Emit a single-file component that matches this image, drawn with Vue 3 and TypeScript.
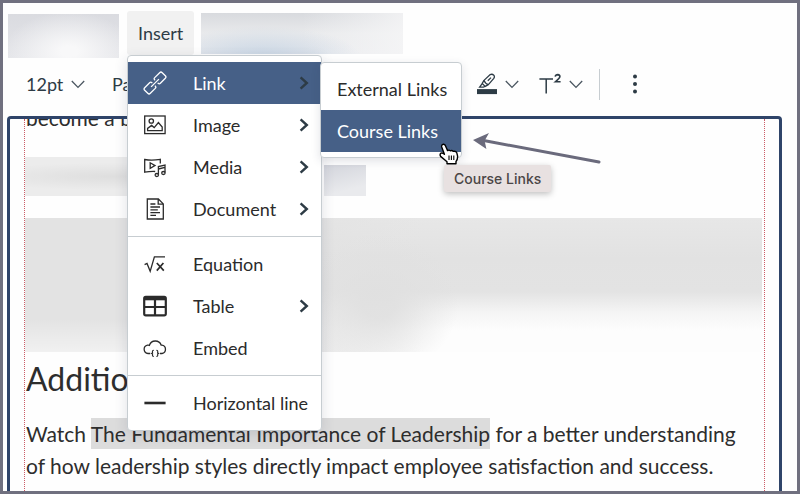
<script setup lang="ts">
import { ref } from 'vue'

interface MenuItem {
  id: string
  label: string
  submenu: boolean
}

const groups: MenuItem[][] = [
  [
    { id: 'link', label: 'Link', submenu: true },
    { id: 'image', label: 'Image', submenu: true },
    { id: 'media', label: 'Media', submenu: true },
    { id: 'document', label: 'Document', submenu: true },
  ],
  [
    { id: 'equation', label: 'Equation', submenu: false },
    { id: 'table', label: 'Table', submenu: true },
    { id: 'embed', label: 'Embed', submenu: false },
  ],
  [{ id: 'line', label: 'Horizontal line', submenu: false }],
]

const linkItems: string[] = ['External Links', 'Course Links']
const activeItem = ref('link')
const activeLink = ref('Course Links')
</script>

<template>
  <div class="frame">
    <nav class="menubar">
      <div class="redacted menus-left"></div>
      <div class="menu-anchor">
        <button class="insert" type="button">Insert</button>
        <div class="menu">
          <ul v-for="(group, index) in groups" :key="index" class="group">
            <li v-for="item in group" :key="item.id" class="row">
              <button
                type="button"
                class="item"
                :class="{ active: item.id === activeItem }"
                @mouseenter="activeItem = item.submenu ? item.id : activeItem"
              >
                <svg class="icon" viewBox="0 0 24 24" fill="none" stroke="currentColor" stroke-width="1.3">
                  <g v-if="item.id === 'link'" transform="rotate(-45 12 12)">
                    <path d="M10 10.2V9.6Q10 8 8.4 8H1.4Q-.4 8-.4 9.8V14.2Q-.4 16 1.4 16H8.4Q10 16 10 14.4V13.8" />
                    <path d="M14 10.2V9.6Q14 8 15.6 8H22.6Q24.4 8 24.4 9.8V14.2Q24.4 16 22.6 16H15.6Q14 16 14 14.4V13.8" />
                    <path d="M6.5 12H17.5" />
                  </g>
                  <g v-else-if="item.id === 'image'">
                    <rect x="1.7" y="3" width="20.4" height="17.6" />
                    <circle cx="8.3" cy="8" r="2.2" />
                    <path d="M4.6 17.6V15.4L8.6 12.4 11.2 14.6 15.4 9.6 19.2 14V17.6Z" />
                  </g>
                  <g v-else-if="item.id === 'media'">
                    <path d="M12.2 16.5Q7 16.3 1.7 17.2V4.5Q9 5.7 17.3 4.3V8.4" />
                    <path d="M7.2 7.8V13.4L12 10.6Z" />
                    <path d="M15.4 19.6V11.6L22 10V17.6M15.4 14L22 12.4" />
                    <ellipse cx="13.8" cy="20" rx="1.7" ry="1.5" />
                    <ellipse cx="20.4" cy="18" rx="1.7" ry="1.5" />
                  </g>
                  <g v-else-if="item.id === 'document'">
                    <path d="M4.3 2H15.4L20.3 6.9V22H4.3ZM15.2 2V7.1H20.3" />
                    <path d="M7.4 7H12.4M7.4 10H17M7.4 12.8H14.8M7.4 15.6H17M7.4 18.4H13" />
                  </g>
                  <g v-else-if="item.id === 'equation'">
                    <path d="M1.6 12.6L4 11.4 7.2 19.2 11.4 4.8H22" />
                    <path d="M13.8 11L20.8 18.6M20.4 11L13.8 18.6" stroke-width="1.7" />
                  </g>
                  <g v-else-if="item.id === 'table'" stroke-width="2.2">
                    <rect x="1.2" y="2.8" width="21.6" height="18.6" rx="1.6" />
                    <path d="M1.2 4.8H22.8" stroke-width="3" />
                    <path d="M1.2 13H22.8M12 4V21" />
                  </g>
                  <g v-else-if="item.id === 'embed'">
                    <path d="M7.2 17.5H5A4.2 4.2 0 0 1 4.5 9.2Q5.5 9 6.4 9.4A6.2 6.2 0 0 1 18.2 9.2H18.8A4.2 4.2 0 0 1 19 17.5H17" />
                    <path d="M10.8 14.3Q8.9 14.6 9.6 16.8L8.6 17.4 9.6 18Q8.9 20.2 10.8 20.5M13.4 14.3Q15.3 14.6 14.6 16.8L15.6 17.4 14.6 18Q15.3 20.2 13.4 20.5" stroke-width="1.1" />
                  </g>
                  <path v-else d="M1.4 12H22.6" stroke-width="2.6" />
                </svg>
                <span class="label">{{ item.label }}</span>
                <svg v-if="item.submenu" class="chevron" viewBox="0 0 10 14" fill="none">
                  <path d="M1.6 1.4L7.8 7 1.6 12.6" stroke="#2d3b45" stroke-width="2.4" />
                </svg>
              </button>
              <div v-if="item.id === 'link' && activeItem === 'link'" class="submenu">
                <button
                  v-for="link in linkItems"
                  :key="link"
                  type="button"
                  class="sub-item"
                  :class="{ active: link === activeLink }"
                  @mouseenter="activeLink = link"
                >
                  {{ link }}
                </button>
                <svg class="pointer" viewBox="0 0 20 22">
                  <path
                    d="M3.2 1.8Q4.8.4 6.2 2.2L8.6 7.6Q10 6.6 11.4 7.8 13 6.9 14.4 8.4 16.8 7.8 17.8 9.8L18.6 13.2Q18.8 16.6 17 18.4V20.8H8V18.8L1.6 13.4Q.4 11.2 2 10.2 3.6 9.6 5.4 11.2L2.7 4Q2.4 2.6 3.2 1.8Z"
                    fill="#fff"
                    stroke="#000"
                    stroke-width="1.4"
                    stroke-linejoin="round"
                  />
                  <path d="M10 12.6V17M12.4 12.6V17M14.8 12.6V17" stroke="#000" stroke-width="1.1" />
                </svg>
                <div class="tooltip" role="tooltip">Course Links</div>
              </div>
            </li>
          </ul>
        </div>
      </div>
      <div class="redacted menus-right"></div>
    </nav>

    <div class="toolbar">
      <button class="tool size" type="button">
        12pt
        <svg class="caret" viewBox="0 0 14 9"><path d="M.8 1L7 7.4 13.2 1" /></svg>
      </button>
      <button class="tool block" type="button">Paragraph</button>
      <button class="tool" type="button" aria-label="Highlight color">
        <svg class="pen" viewBox="0 0 20 22" fill="none" stroke="#2d3b45" stroke-width="1.3">
          <path d="M7 7.4L13.2 1.6Q15.2.6 16.8 2.2 18 3.8 16.8 5.4L11.4 11.6Q8.6 11 7 7.4ZM7 7.4L5.2 10.4 8.2 13.4 11.4 11.6M5.2 10.6L2.6 14.2H6.4L8 13.2M10.8 7.8L14 4.6" />
          <path d="M0 18.6H20" stroke-width="5" />
        </svg>
        <svg class="caret" viewBox="0 0 14 9"><path d="M.8 1L7 7.4 13.2 1" /></svg>
      </button>
      <button class="tool" type="button" aria-label="Superscript">
        <svg class="super" viewBox="0 0 22 22" fill="none" stroke="#2d3b45">
          <path d="M.4 6H14M7.2 6V20.6" stroke-width="1.5" />
          <path d="M16.2 3.7Q16.6 1.6 18.8 1.6 21 1.8 20.9 3.8 20.8 5 16.4 8.8H21.6" stroke-width="1.6" />
        </svg>
        <svg class="caret" viewBox="0 0 14 9"><path d="M.8 1L7 7.4 13.2 1" /></svg>
      </button>
      <span class="divider"></span>
      <button class="tool more" type="button" aria-label="More">
        <svg class="dots" viewBox="0 0 6 20" fill="#2d3b45">
          <circle cx="3" cy="2.5" r="2" />
          <circle cx="3" cy="10" r="2" />
          <circle cx="3" cy="17.5" r="2" />
        </svg>
      </button>
    </div>

    <main class="editor">
      <article class="content">
        <p class="scrolled">become a better</p>
        <div class="line">
          <div class="redacted text-short"></div>
          <div class="redacted text-chip"></div>
        </div>
        <div class="redacted text-long"></div>
        <h2>Additional</h2>
        <p>
          Watch <mark>The Fundamental Importance of Leadership</mark> for a better understanding
          of how leadership styles directly impact employee satisfaction and success.
        </p>
      </article>
    </main>

    <svg class="arrow" viewBox="0 0 130 34">
      <path d="M14 8.8L128 30" stroke="#6a6a7c" stroke-width="3" stroke-linecap="round" />
      <path d="M2 8L18 1 13.6 8.7 15.4 17Z" fill="#6a6a7c" />
    </svg>
  </div>
</template>

<style>
body {
  margin: 0;
}
</style>

<style scoped>
.frame {
  position: relative;
  display: flex;
  flex-direction: column;
  box-sizing: border-box;
  min-height: 100vh;
  overflow: hidden;
  border: 3px solid #70707f;
  background: #fefefe;
  color: #2d3b45;
  font-family: Lato, "Liberation Sans", sans-serif;
  font-size: 18px;
}

button {
  margin: 0;
  padding: 0;
  border: 0;
  background: none;
  color: inherit;
  font: inherit;
  text-align: left;
}

.menubar {
  display: flex;
  align-items: flex-start;
  padding: 8px 5px 0;
}

.menus-left {
  width: 111px;
  height: 44px;
  margin-top: 3px;
  background:
    radial-gradient(ellipse at 55% 85%, #f8f8f9 10%, rgba(248, 248, 249, 0) 75%),
    linear-gradient(#dadbe0, #e4e5e9);
}

.menus-right {
  width: 202px;
  height: 41px;
  margin: 2px 0 0 7px;
  background:
    radial-gradient(ellipse at 30% 110%, rgba(196, 211, 227, 0.9), rgba(220, 226, 233, 0) 50%),
    linear-gradient(90deg, rgba(240, 240, 242, 0) 50%, rgba(246, 246, 247, 0.8)),
    linear-gradient(#d8dade, #e9eaec 50%, #eaebee);
}

.menu-anchor {
  position: relative;
  z-index: 2;
  margin-left: 8px;
}

.insert {
  display: block;
  height: 44px;
  padding: 0 11px;
  border-radius: 3px;
  background: #f1f1f1;
}

.menu {
  position: absolute;
  top: 100%;
  left: 0;
  width: 193px;
  border: 1px solid #c7cdd1;
  border-radius: 4px;
  background: #fff;
  box-shadow: 0 4px 14px rgba(40, 50, 80, 0.14);
  color: #2b2b2b;
}

.group {
  margin: 0;
  padding: 6px 0;
  list-style: none;
}

.group + .group {
  border-top: 1px solid #c7cdd1;
}

.row {
  position: relative;
}

.item {
  display: flex;
  align-items: center;
  width: 100%;
  height: 42px;
  padding: 0 12px 0 15px;
  white-space: nowrap;
}

.active {
  background: #466087;
  color: #fff;
}

.icon {
  flex: none;
  width: 24px;
  height: 24px;
}

.label {
  flex: 1;
  margin-left: 26px;
}

.chevron {
  flex: none;
  width: 10px;
  height: 14px;
}

.submenu {
  position: absolute;
  top: 0;
  left: 100%;
  width: 140px;
  margin-left: -1px;
  padding: 5px 0;
  border: 1px solid #c7cdd1;
  border-radius: 4px;
  background: #fff;
  box-shadow: 0 3px 10px rgba(40, 50, 80, 0.14);
}

.sub-item {
  display: block;
  width: 100%;
  height: 42px;
  padding: 0 16px;
  white-space: nowrap;
}

.pointer {
  position: absolute;
  z-index: 1;
  top: 80px;
  left: 118px;
  width: 20px;
  height: 22px;
}

.tooltip {
  position: absolute;
  top: 102px;
  left: 123px;
  padding: 0 10px;
  border-radius: 2px;
  background: #e8e1e1;
  box-shadow: 0 2px 6px rgba(0, 0, 0, 0.25);
  color: #4b4646;
  font: 500 14px/27px Inter, "Liberation Sans", sans-serif;
  white-space: nowrap;
}

.toolbar {
  display: flex;
  align-items: center;
  box-sizing: border-box;
  height: 58px;
  padding: 0 0 6px 23px;
}

.tool {
  display: flex;
  align-items: center;
  gap: 8px;
  margin-right: 20px;
}

.size {
  width: 66px;
}

.block {
  width: 345px;
}

.caret {
  width: 14px;
  height: 9px;
  fill: none;
  stroke: #4a5660;
  stroke-width: 1.3;
}

.pen {
  width: 20px;
  height: 22px;
}

.super {
  width: 22px;
  height: 22px;
}

.divider {
  width: 1px;
  height: 31px;
  margin: 0 32px 0 -4px;
  background: #c7cdd1;
}

.dots {
  width: 6px;
  height: 20px;
}

.editor {
  display: grid;
  flex: 1;
  margin: 0 15px 0 4px;
  padding: 0 14px;
  overflow: hidden;
  border: solid #2f4469;
  border-width: 3px 3px 0;
  border-radius: 4px 4px 0 0;
}

.content {
  border: dotted #cc5c66;
  border-width: 0 1px;
  color: #2d2d2d;
  font-size: 21px;
  line-height: 32px;
}

p {
  margin: 0;
  padding: 0 16px 0 1px;
}

.scrolled {
  margin-top: -17px;
}

.line {
  display: flex;
  align-items: flex-end;
  gap: 4px;
  margin-top: 23px;
}

.text-short {
  width: 295px;
  height: 39px;
  background: radial-gradient(ellipse at 30% 50%, #dedede, #ececec 50%);
}

.text-chip {
  width: 42px;
  height: 31px;
  background: linear-gradient(165deg, #d3d5dc, #e9eaed 75%);
}

.text-long {
  height: 134px;
  margin: 22px 2px 0 0;
  background:
    linear-gradient(rgba(255, 255, 255, 0) 75%, rgba(255, 255, 255, 0.5)) left / 40% 100% no-repeat,
    radial-gradient(ellipse 80px 70px at 48% 64%, rgba(224, 224, 224, 0.9) 20%, rgba(235, 235, 235, 0)),
    linear-gradient(90deg, #e3e3e3 35%, rgba(227, 227, 227, 0) 54%),
    linear-gradient(#e7e7e7, #e2e2e2 30%, #e3e3e3 55%, #f4f4f4 70%, #fdfdfd 84%);
}

h2 {
  margin: 7px 0 19px;
  padding-left: 1px;
  font-size: 32px;
  font-weight: 400;
  line-height: 40px;
}

mark {
  padding: 3px 0;
  background: #dcdcdc;
  color: inherit;
}

.arrow {
  position: absolute;
  z-index: 3;
  top: 129px;
  left: 468px;
  width: 130px;
  height: 34px;
}
</style>
